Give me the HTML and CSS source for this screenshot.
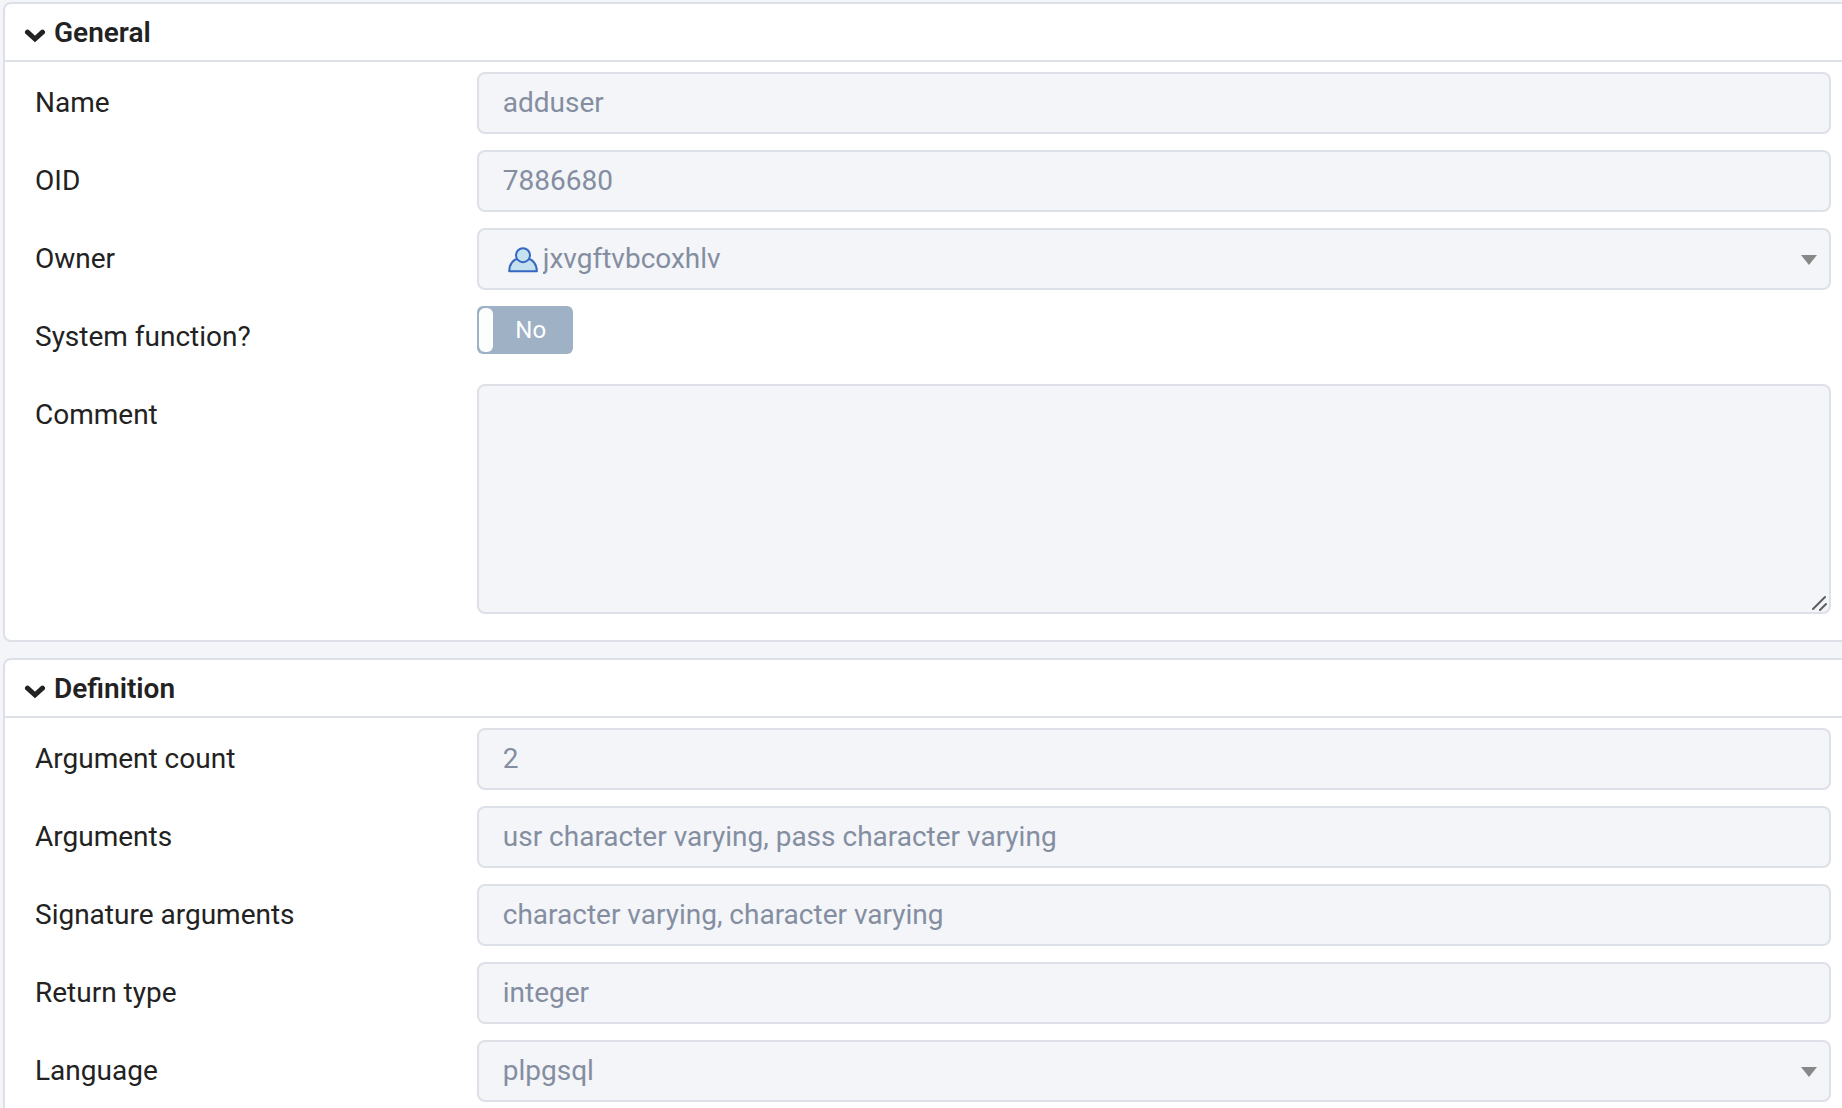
FILE: index.html
```html
<!DOCTYPE html>
<html lang="en">
<head>
  <meta charset="UTF-8" />
  <meta name="viewport" content="width=device-width, initial-scale=1.0" />
  <title>Function properties</title>
  <link rel="stylesheet" href="styles.css">
</head>
<body>
  <section class="card">
    <h2 class="card-header">
      <button type="button" class="toggle-btn">
        <svg class="chevron" viewBox="0 0 22 14" aria-hidden="true"><path d="M3.5 3.2 L11 10 L18.5 3.2" /></svg>
        General
      </button>
    </h2>
    <div class="card-body">
      <div class="row">
        <label for="name">Name</label>
        <div class="field"><input id="name" class="control" type="text" value="adduser" disabled /></div>
      </div>
      <div class="row">
        <label for="oid">OID</label>
        <div class="field"><input id="oid" class="control" type="text" value="7886680" disabled /></div>
      </div>
      <div class="row">
        <label for="owner">Owner</label>
        <div class="field">
          <select id="owner" class="control with-icon" disabled>
            <option>jxvgftvbcoxhlv</option>
          </select>
          <svg class="user-icon" viewBox="0 0 30 26" aria-hidden="true">
            <path d="M1.2 24.3 C1.2 17 5.5 12 11 11.5 L19 11.5 C24.5 12 28.8 17 28.8 24.3 Z" />
            <circle cx="15" cy="8.2" r="7" />
          </svg>
          <svg class="caret" viewBox="0 0 16 10" aria-hidden="true"><path d="M0 0 H16 L8 10 Z" /></svg>
        </div>
      </div>
      <div class="row">
        <label for="system">System function?</label>
        <div class="field">
          <label class="switch">
            <input id="system" type="checkbox" disabled />
            <span class="handle"></span>
            <span class="switch-text">No</span>
          </label>
        </div>
      </div>
      <div class="row">
        <label for="comment">Comment</label>
        <div class="field">
          <textarea id="comment" class="control comment" disabled></textarea>
          <svg class="grip" viewBox="0 0 16 16" aria-hidden="true"><path d="M2 14 L14 2 M9 15 L15 9" /></svg>
        </div>
      </div>
    </div>
  </section>

  <section class="card">
    <h2 class="card-header">
      <button type="button" class="toggle-btn">
        <svg class="chevron" viewBox="0 0 22 14" aria-hidden="true"><path d="M3.5 3.2 L11 10 L18.5 3.2" /></svg>
        Definition
      </button>
    </h2>
    <div class="card-body">
      <div class="row">
        <label for="argcount">Argument count</label>
        <div class="field"><input id="argcount" class="control" type="text" value="2" disabled /></div>
      </div>
      <div class="row">
        <label for="args">Arguments</label>
        <div class="field"><input id="args" class="control" type="text" value="usr character varying, pass character varying" disabled /></div>
      </div>
      <div class="row">
        <label for="sigargs">Signature arguments</label>
        <div class="field"><input id="sigargs" class="control" type="text" value="character varying, character varying" disabled /></div>
      </div>
      <div class="row">
        <label for="rettype">Return type</label>
        <div class="field"><input id="rettype" class="control" type="text" value="integer" disabled /></div>
      </div>
      <div class="row">
        <label for="language">Language</label>
        <div class="field">
          <select id="language" class="control" disabled>
            <option>plpgsql</option>
          </select>
          <svg class="caret" viewBox="0 0 16 10" aria-hidden="true"><path d="M0 0 H16 L8 10 Z" /></svg>
        </div>
      </div>
    </div>
  </section>
</body>
</html>
```
FILE: styles.css
```css
* {
  box-sizing: border-box;
}
html {
  overflow: hidden;
}
body {
  margin: 0;
  padding: 2px 0 0 3px;
  background: #f3f5f9;
  color: #222;
  font-family: Roboto, sans-serif;
  font-size: 28px;
}
.card {
  background: white;
  border: 2px solid #dde0e6;
  border-right: none;
  border-radius: 8px 0 0 8px;
  margin-bottom: 16px;
}
.card-header {
  margin: 0;
  border-bottom: 2px solid #dde0e6;
}
.toggle-btn {
  display: flex;
  align-items: center;
  gap: 8px;
  width: 100%;
  height: 56px;
  padding: 0 19px;
  border: none;
  background: none;
  color: #222;
  font-family: inherit;
  font-size: 28px;
  font-weight: 600;
  cursor: pointer;
}
.chevron {
  width: 22px;
  height: 14px;
  margin-top: 8px;
  fill: none;
  stroke: #222;
  stroke-width: 5;
  stroke-linecap: round;
}
.card-body {
  display: flex;
  flex-direction: column;
  gap: 16px;
  padding: 10px 3px 26px 7px;
}
.row {
  display: grid;
  grid-template-columns: 1fr 3fr;
}
.row > label {
  padding-left: 23px;
  line-height: 62px;
}
.field {
  position: relative;
  padding: 0 8px;
  min-height: 62px;
}
.control {
  display: block;
  width: 100%;
  height: 62px;
  padding: 0 24px 2px;
  border: 2px solid #dde0e6;
  border-radius: 8px;
  background: #f3f5f9;
  color: #848ea0;
  font-family: inherit;
  font-size: 28px;
  opacity: 1;
  appearance: none;
}
.with-icon {
  padding-left: 64px;
}
.comment {
  height: 230px;
  padding: 12px 24px;
  resize: vertical;
}
.comment::-webkit-resizer {
  display: none;
}
/* icons lying over the controls */
.user-icon, .caret, .grip {
  position: absolute;
  pointer-events: none;
}
.user-icon {
  left: 39px;
  top: 19px;
  width: 30px;
  height: 26px;
  fill: #c5e1f0;
  stroke: #3567c0;
  stroke-width: 2;
  stroke-linejoin: round;
}
.caret {
  right: 22px;
  top: 27px;
  width: 16px;
  height: 10px;
  fill: #888;
}
.grip {
  right: 12px;
  bottom: 3px;
  width: 16px;
  height: 16px;
  stroke: #5c5f63;
  stroke-width: 2;
  stroke-linecap: round;
}
.switch {
  display: flex;
  width: 96px;
  height: 48px;
  padding: 2px;
  border-radius: 6px;
  background: #9eb1c5;
  color: white;
  font-size: 24px;
  line-height: 44px;
}
.switch input {
  position: absolute;
  width: 96px;
  height: 48px;
  margin: 0;
  opacity: 0;
}
.handle {
  width: 14px;
  border-radius: 6px;
  background: #fcfefe;
}
.switch-text {
  flex: 1;
  padding-right: 2px;
  text-align: center;
}
```
